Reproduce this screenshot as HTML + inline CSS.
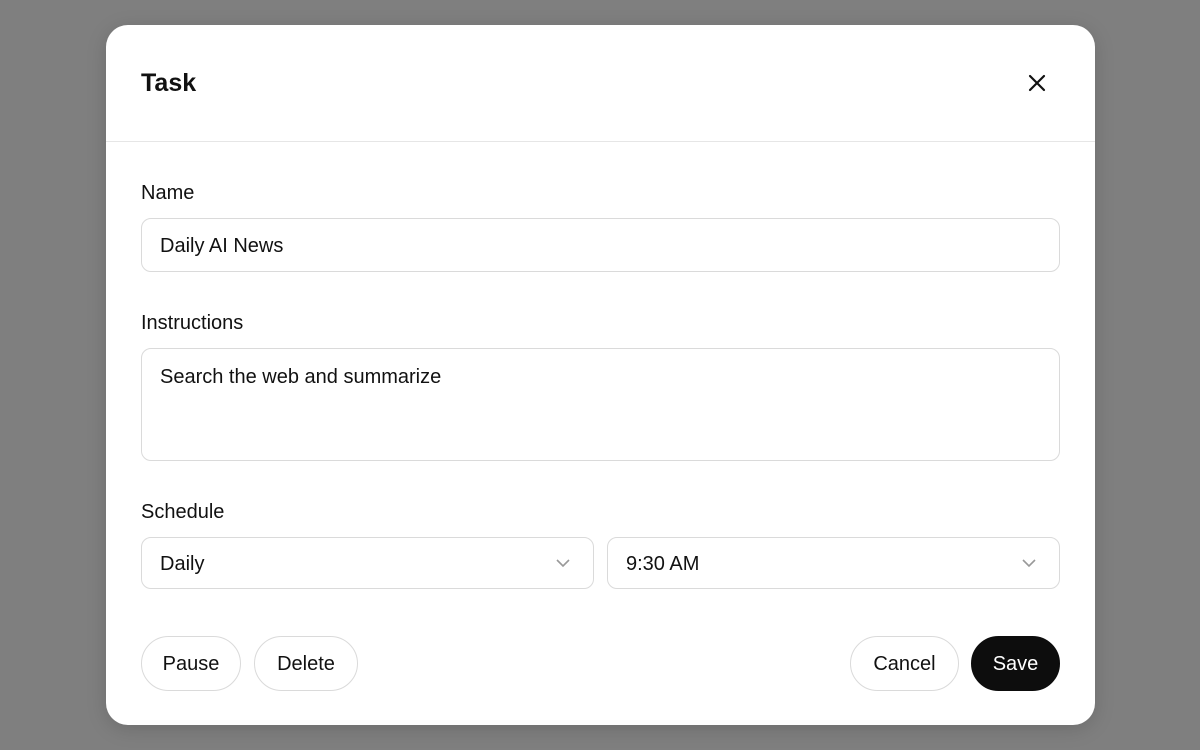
<!DOCTYPE html>
<html><head><style>
*{box-sizing:border-box;margin:0;padding:0}
body{width:1200px;height:750px;background:#7f7f7f;font-family:"Liberation Sans",sans-serif;color:#111;position:relative;overflow:hidden}
.m{position:absolute;left:106px;top:25px;width:989px;height:700px;background:#fff;border-radius:22px;box-shadow:0 4px 20px rgba(0,0,0,.15)}
.t{position:absolute;left:35px;top:44px;font-size:25px;font-weight:bold;letter-spacing:0px}
.x{position:absolute;left:920px;top:47px}
.hr{position:absolute;left:0;right:0;top:116px;border-top:1px solid #e6e6e6}
.l{position:absolute;left:35px;font-size:20px}
.f{position:absolute;border:1px solid #dadada;border-radius:10px;font-size:20px;padding-left:18px}
.b{position:absolute;top:611px;height:55px;border:1px solid #dadada;border-radius:28px;font-size:20px;display:flex;align-items:center;justify-content:center;padding-top:2px}
svg.c{position:absolute;right:22px;top:20px}
</style></head><body>
<div class="m">
<div class="t">Task</div>
<svg class="x" width="22" height="22" viewBox="0 0 22 22"><path d="M4 4L18 18M18 4L4 18" stroke="#111" stroke-width="2.2" stroke-linecap="round"/></svg>
<div class="hr"></div>
<div class="l" style="top:157px">Name</div>
<div class="f" style="left:35px;top:193px;width:919px;height:54px;line-height:55px">Daily AI News</div>
<div class="l" style="top:287px">Instructions</div>
<div class="f" style="left:35px;top:323px;width:919px;height:113px;padding-top:17px">Search the web and summarize</div>
<div class="l" style="top:476px">Schedule</div>
<div class="f" style="left:35px;top:512px;width:453px;height:52px;line-height:53px">Daily<svg class="c" width="16" height="10" viewBox="0 0 16 10"><path d="M2 2L8 8L14 2" stroke="#999" stroke-width="1.6" fill="none"/></svg></div>
<div class="f" style="left:501px;top:512px;width:453px;height:52px;line-height:53px">9:30 AM<svg class="c" width="16" height="10" viewBox="0 0 16 10"><path d="M2 2L8 8L14 2" stroke="#999" stroke-width="1.6" fill="none"/></svg></div>
<div class="b" style="left:35px;width:100px">Pause</div>
<div class="b" style="left:148px;width:104px">Delete</div>
<div class="b" style="left:744px;width:109px">Cancel</div>
<div class="b" style="left:865px;width:89px;background:#0d0d0d;border-color:#0d0d0d;color:#fff">Save</div>
</div>
</body></html>
